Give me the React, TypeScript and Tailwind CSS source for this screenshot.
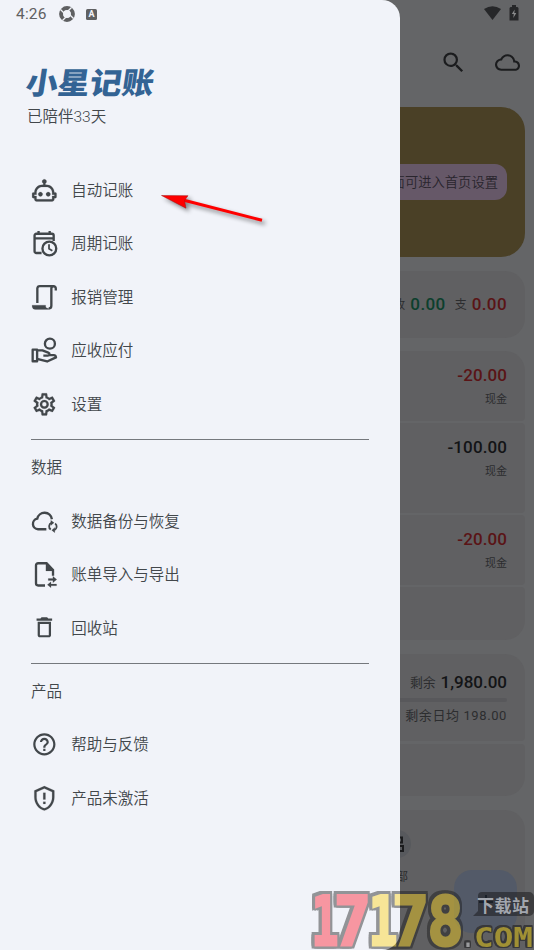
import type { ReactNode } from "react";
import { MdCloudQueue, MdDeleteOutline, MdHelpOutline, MdSearch } from "react-icons/md";

const Icon = ({ children }: { children: ReactNode }) => (
  <svg viewBox="0 0 24 24" className="size-[26.7px]" fill="currentColor" stroke="currentColor" strokeWidth=".15">
    {children}
  </svg>
);

const line = { fill: "none", stroke: "currentColor", strokeWidth: 2.1 };

const icons = {
  robot: (
    <Icon>
      <path d="M17.5 15.5C17.5 16.61 16.61 17.5 15.5 17.5S13.5 16.61 13.5 15.5 14.4 13.5 15.5 13.5 17.5 14.4 17.5 15.5M8.5 13.5C7.4 13.5 6.5 14.4 6.5 15.5S7.4 17.5 8.5 17.5 10.5 16.61 10.5 15.5 9.61 13.5 8.5 13.5M23 15V18C23 18.55 22.55 19 22 19H21V20C21 21.11 20.11 22 19 22H5C3.9 22 3 21.11 3 20V19H2C1.45 19 1 18.55 1 18V15C1 14.45 1.45 14 2 14H3C3 10.13 6.13 7 10 7H11V5.73C10.4 5.39 10 4.74 10 4C10 2.9 10.9 2 12 2S14 2.9 14 4C14 4.74 13.6 5.39 13 5.73V7H14C17.87 7 21 10.13 21 14H22C22.55 14 23 14.45 23 15M21 16H19V14C19 11.24 16.76 9 14 9H10C7.24 9 5 11.24 5 14V16H3V17H5V20H19V17H21V16Z" />
    </Icon>
  ),
  calendar: (
    <Icon>
      <g {...line}>
        <path d="M9.5 20.7H4.8A1.6 1.6 0 0 1 3.2 19.1V5A1.6 1.6 0 0 1 4.8 3.4H18.8A1.6 1.6 0 0 1 20.4 5v5M3 7.6h17.4M6.8 1v3M16.8 1v3" />
        <circle cx="16.5" cy="16.6" r="6.2" />
        <path d="M16.2 12.8v4.1l3 1.8" strokeWidth="1.6" />
      </g>
    </Icon>
  ),
  script: (
    <Icon>
      <path {...line} d="M5.7 17V4A2.3 2.3 0 0 1 8 1.9h12.2M22.3 5.8V4a2 2 0 0 0-4 0v15.6a2.4 2.4 0 0 1-2.4 2.4" />
      <path d="M1 19h12.2v1.2c0 1 .9 1.6 2.6 1.7V23H4.2C2.2 23 1 21.7 1 20z" />
    </Icon>
  ),
  hand: (
    <Icon>
      <g {...line} strokeLinejoin="round">
        <circle cx="17" cy="6" r="4.5" />
        <path d="M1.5 11.4h4v10.4h-4zM5.5 12h4.8l5.2 2.1c1.8.8 1.3 2.6-.4 2.6h-4M15.8 16.3h4.7c1.2 0 1.8.8 2 2l-8 3.7-9-2.3" />
      </g>
    </Icon>
  ),
  cog: (
    <Icon>
      <path d="M12,8A4,4 0 0,1 16,12A4,4 0 0,1 12,16A4,4 0 0,1 8,12A4,4 0 0,1 12,8M12,10A2,2 0 0,0 10,12A2,2 0 0,0 12,14A2,2 0 0,0 14,12A2,2 0 0,0 12,10M10,22C9.75,22 9.54,21.82 9.5,21.58L9.13,18.93C8.5,18.68 7.96,18.34 7.44,17.94L4.95,18.95C4.73,19.03 4.46,18.95 4.34,18.73L2.34,15.27C2.21,15.05 2.27,14.78 2.46,14.63L4.57,12.97L4.5,12L4.57,11L2.46,9.37C2.27,9.22 2.21,8.95 2.34,8.73L4.34,5.27C4.46,5.05 4.73,4.96 4.95,5.05L7.44,6.05C7.96,5.66 8.5,5.32 9.13,5.07L9.5,2.42C9.54,2.18 9.75,2 10,2H14C14.25,2 14.46,2.18 14.5,2.42L14.87,5.07C15.5,5.32 16.04,5.66 16.56,6.05L19.05,5.05C19.27,4.96 19.54,5.05 19.66,5.27L21.66,8.73C21.79,8.95 21.73,9.22 21.54,9.37L19.43,11L19.5,12L19.43,13L21.54,14.63C21.73,14.78 21.79,15.05 21.66,15.27L19.66,18.73C19.54,18.95 19.27,19.04 19.05,18.95L16.56,17.95C16.04,18.34 15.5,18.68 14.87,18.93L14.5,21.58C14.46,21.82 14.25,22 14,22H10M11.25,4L10.88,6.61C9.68,6.86 8.62,7.5 7.85,8.39L5.44,7.35L4.69,8.65L6.8,10.2C6.4,11.37 6.4,12.64 6.8,13.8L4.68,15.36L5.43,16.66L7.86,15.62C8.63,16.5 9.68,17.14 10.87,17.38L11.24,20H12.76L13.13,17.39C14.32,17.14 15.37,16.5 16.14,15.62L18.57,16.66L19.32,15.36L17.2,13.81C17.6,12.64 17.6,11.37 17.2,10.2L19.31,8.65L18.56,7.35L16.15,8.39C15.38,7.5 14.32,6.86 13.12,6.62L12.75,4H11.25Z" />
    </Icon>
  ),
  cloudSync: (
    <Icon>
      <path {...line} d="M13.8 20H6.3a4.8 4.8 0 0 1-.7-9.5 6.7 6.7 0 0 1 13.2.5" />
      <path {...line} strokeWidth="1.6" d="M18.4 14.2a3.5 3.5 0 0 0-.6 6.1M21 20.8a3.5 3.5 0 0 0 .7-6" />
      <path d="M17.8 12l3 2.1-3 2.6zM21.4 18.4v4.7l-2.8-2.3z" />
    </Icon>
  ),
  fileSwap: (
    <Icon>
      <path {...line} d="M12.6 22H6.4A1.9 1.9 0 0 1 4.5 20.1V3.9A1.9 1.9 0 0 1 6.4 2H14l5.8 6v5.3" />
      <path d="M13.4 2l6.8 6.9h-6.8zM19.7 13.7l3.5 2.9-3.5 2.9v-2h-4.2v-1.7h4.2zM18 18.7v2h5v1.6h-5v1.7l-3.3-2.6z" />
    </Icon>
  ),
  trash: <MdDeleteOutline className="size-[26.7px]" />,
  help: <MdHelpOutline className="size-[26.7px]" />,
  shield: (
    <Icon>
      <path d="M21,11C21,16.55 17.16,21.74 12,23C6.84,21.74 3,16.55 3,11V5L12,1L21,5V11M12,21C15.75,20 19,15.54 19,11.22V6.3L12,3.18L5,6.3V11.22C5,15.54 8.25,20 12,21M11,7H13V13H11V7M11,15H13V17H11V15Z" />
    </Icon>
  ),
};

type Entry = { icon: ReactNode; label: string };

const sections: { title?: string; items: Entry[] }[] = [
  {
    items: [
      { icon: icons.robot, label: "自动记账" },
      { icon: icons.calendar, label: "周期记账" },
      { icon: icons.script, label: "报销管理" },
      { icon: icons.hand, label: "应收应付" },
      { icon: icons.cog, label: "设置" },
    ],
  },
  {
    title: "数据",
    items: [
      { icon: icons.cloudSync, label: "数据备份与恢复" },
      { icon: icons.fileSwap, label: "账单导入与导出" },
      { icon: icons.trash, label: "回收站" },
    ],
  },
  {
    title: "产品",
    items: [
      { icon: icons.help, label: "帮助与反馈" },
      { icon: icons.shield, label: "产品未激活" },
    ],
  },
];

const Drawer = () => (
  <aside className="absolute inset-y-0 left-0 flex w-[400px] flex-col rounded-r-[18px] bg-[#f1f3f9] text-[#42474b]">
    <div className="flex h-7 items-center pl-4 text-[#5f6062]">
      <span className="w-[43px] pt-[2px] text-[15.5px] tracking-[0.2px]">4:26</span>
      <svg viewBox="0 0 16 16" className="size-4">
        <circle cx="8" cy="8" r="5.9" fill="none" stroke="currentColor" strokeWidth="4" />
        <path d="M1.5 3.5l4 4M12.5 1.5l-4 4M14.5 12.5l-4-4M3.5 14.5l4-4" stroke="#f1f3f9" strokeWidth="1.3" />
        <circle cx="8" cy="8" r="3.6" fill="#f1f3f9" />
      </svg>
      <span className="ml-[11px] flex size-[11px] items-center justify-center rounded-[1.5px] bg-current text-[9px] font-bold leading-none">
        <span className="text-[#f1f3f9]">A</span>
      </span>
    </div>
    <h1 className="ml-[26px] mt-[38px] h-9 w-[130px] origin-center -skew-x-[8deg] scale-y-[.94] text-[32px] font-black leading-9 text-[#336394]">
      小星记账
    </h1>
    <p className="h-[30px] pl-[27px] text-[15.5px] font-[350] leading-[31px]">已陪伴33天</p>
    <nav className="mt-[31.75px] text-[15.5px] font-[350]">
      {sections.map((section, i) => (
        <section key={i}>
          {section.title && (
            <>
              <hr className="mx-[31px] mt-[7.5px] border-t-[1.5px] border-[#75787d]" />
              <h2 className="h-[54.75px] pl-[31px] pt-px leading-[54.25px]">{section.title}</h2>
            </>
          )}
          {section.items.map((item) => (
            <div key={item.label} className="flex h-[53.5px] items-center gap-[13.5px] pl-[31px]">
              <span className="mb-px">{item.icon}</span>
              <span className="pt-[2px]">{item.label}</span>
            </div>
          ))}
        </section>
      ))}
    </nav>
  </aside>
);

const Record = ({ amount, className }: { amount: string; className: string }) => (
  <div className={`flex flex-col items-end bg-[#606062] pr-[18px] pt-3 ${className}`}>
    <span className="text-[17px] font-medium leading-6 tracking-[0.1px]">{amount}</span>
    <span className="pt-px text-[11px] leading-6 text-[#2c2d2f]">现金</span>
  </div>
);

const HomePage = () => (
  <main className="flex h-full flex-col px-[9px] text-[#2c2d2f]">
    <div className="flex h-7 shrink-0 items-center justify-end gap-2 pb-[2px] pr-[6px] text-[#262729]">
      <svg viewBox="0 0 17 14" className="h-3.5 w-[17px]" fill="currentColor">
        <path d="M0 3Q8.5-2.5 17 3L8.5 14z" />
      </svg>
      <svg viewBox="0 0 10 16" className="h-4 w-2.5">
        <path d="M3 0h4v2h1.5L9.5 3v12.5h-9V3l1-1H3z" fill="currentColor" />
        <path d="M5.7 4.5L2.8 9h2L4.3 13l3-5h-2z" fill="#8a8b8c" />
      </svg>
    </div>
    <div className="flex h-[79px] shrink-0 items-center justify-end gap-7 pb-[11px] pr-[5px] text-[#1b1c1e]">
      <MdSearch className="size-[27px]" />
      <MdCloudQueue className="size-[25px]" />
    </div>

    <div className="flex h-[150px] shrink-0 items-center justify-end rounded-3xl bg-[#4a4026] pr-[18px]">
      <div className="flex h-9 items-center rounded-xl bg-[#665868] px-[9px] pt-px text-[13.3px] font-[350] text-[#29252d]">
        左滑界面可进入首页设置
      </div>
    </div>

    <div className="mt-3.5 flex h-[67px] shrink-0 items-center justify-end rounded-[20px] bg-[#606062] pr-[18px] text-xs">
      <span>收</span>
      <b className="ml-[5px] text-[17px] font-medium tracking-[0.4px] text-[#0c3f2d]">0.00</b>
      <span className="ml-[9px]">支</span>
      <b className="ml-[5px] text-[17px] font-medium tracking-[0.4px] text-[#5a1416]">0.00</b>
    </div>

    <div className="mt-[13px] flex shrink-0 flex-col gap-[2px]">
      <Record amount="-20.00" className="h-[70px] rounded-t-[20px] rounded-b text-[#5a1416]" />
      <Record amount="-100.00" className="h-[90px] rounded text-[#131416]" />
      <Record amount="-20.00" className="h-[70px] rounded text-[#5a1416]" />
      <div className="h-[53px] rounded-t rounded-b-[20px] bg-[#606062]" />
    </div>

    <div className="mt-[14px] flex shrink-0 flex-col gap-[3px]">
      <div className="flex h-[87px] flex-col items-end rounded-t-[20px] rounded-b bg-[#606062] pr-[18px] pt-[17px]">
        <div className="flex h-6 items-center text-[12.8px]">
          剩余<b className="ml-[5px] text-[17px] font-medium text-[#131416]">1,980.00</b>
        </div>
        <div className="mt-[3px] h-1 w-[480px] rounded bg-[#58585b]" />
        <div className="mt-[2px] text-[13px] leading-6 tracking-[0.6px]">剩余日均 198.00</div>
      </div>
      <div className="h-[52px] rounded-t rounded-b-[20px] bg-[#606062]" />
    </div>

    <div className="mt-3.5 flex h-[140px] shrink-0 flex-col items-end rounded-t-[20px] bg-[#606062] pr-[114px] pt-5">
      <div className="flex size-7 items-center justify-center rounded-full bg-[#57595d]">
        <svg viewBox="0 0 16 16" className="size-4 -translate-x-px" fill="none" stroke="#1b1c1e" strokeWidth="2">
          <path d="M5 1.5h9v5H5zM1 10h5.5v5H1zM9.5 10H15v5H9.5z" />
        </svg>
      </div>
      <span className="mt-[11px] pr-[3px] text-xs">全部</span>
    </div>
  </main>
);

// big digits, each squeezed into its own slot
const digits = [
  { char: "1", x: 7.4, width: 27, color: "#ff1e2f" },
  { char: "7", x: 30, width: 37, color: "#ff1e2f" },
  { char: "1", x: 64.5, width: 29, color: "#ffd517" },
  { char: "7", x: 88, width: 37, color: "#ffd517" },
  { char: "8", x: 123.5, width: 36, color: "#ffd517" },
];

const Watermark = () => (
  <svg
    viewBox="0 0 230 68"
    className="absolute bottom-0 right-0 h-[68px] w-[230px] overflow-visible font-['DejaVu_Sans_Mono'] font-bold"
  >
    <g className="opacity-[.43]">
      <g
        strokeWidth="3"
        className="[filter:drop-shadow(2.5px_0_0_#181818)_drop-shadow(-2.5px_0_0_#181818)_drop-shadow(0_2.5px_0_#181818)_drop-shadow(0_-2.5px_0_#181818)]"
      >
        {digits.map(({ char, x, width, color }) => (
          <text key={x} x={x} y="63" fontSize="68" textLength={width} lengthAdjust="spacingAndGlyphs" fill={color} stroke={color}>
            {char}
          </text>
        ))}
      </g>
    </g>
    <path d="M178 10h47a5 5 0 0 1 5 5v14a5 5 0 0 1-5 5h-56l5-5V14a4 4 0 0 1 4-4" fill="#1c1c1e" fillOpacity=".55" />
    <text x="173" y="29.5" fontSize="17" textLength="52" fill="#a2a6ae" className="font-['Noto_Sans_CJK_SC']">下载站</text>
    <g
      fill="#a09034"
      className="[filter:drop-shadow(1.5px_0_0_#38383a)_drop-shadow(-1.5px_0_0_#38383a)_drop-shadow(0_1.5px_0_#38383a)_drop-shadow(0_-1.5px_0_#38383a)]"
    >
      <text x="158" y="65" fontSize="24" textLength="12" lengthAdjust="spacingAndGlyphs" fill="#9a9b9d">.</text>
      <text x="170" y="65" fontSize="26" textLength="59" lengthAdjust="spacingAndGlyphs">COM</text>
    </g>
  </svg>
);

const App = () => (
  <div className="relative h-[950px] w-[534px] overflow-hidden bg-[#646567] font-[Roboto,'Noto_Sans_CJK_SC',sans-serif]">
    <HomePage />
    <button className="absolute bottom-[17px] right-[17px] flex size-[63px] items-center justify-center rounded-[18px] bg-[#535a68]">
      <svg viewBox="0 0 24 24" className="size-6" stroke="#1a2638" strokeWidth="2">
        <path d="M12 5v14M5 12h14" />
      </svg>
    </button>
    <Drawer />
    <svg viewBox="0 0 120 45" className="absolute left-[155px] top-[187px] h-[45px] w-[120px] drop-shadow-[3px_3px_2px_rgba(0,0,0,0.45)]">
      <path d="M29 13.3L107 33.3" stroke="#fe0000" strokeWidth="3" />
      <path d="M6.5 8.5l26.5.2-3.5 4.8 1.5 7.7z" fill="#fe0000" stroke="#a01010" strokeWidth=".5" />
    </svg>
    <Watermark />
  </div>
);

export default App;
